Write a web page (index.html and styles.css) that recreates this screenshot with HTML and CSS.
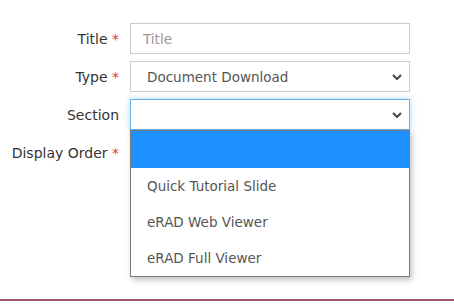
FILE: index.html
```html
<!DOCTYPE html>
<html lang="en">
<head>
<meta charset="UTF-8">
<meta name="viewport" content="width=device-width, initial-scale=1.0">
<title>Edit Link</title>
<link rel="stylesheet" href="styles.css">
</head>
<body>

<form class="link-form">
  <div class="form-row">
    <label class="form-label" for="title">Title <span class="req">*</span></label>
    <input class="form-control" type="text" id="title" placeholder="Title">
  </div>

  <div class="form-row">
    <label class="form-label">Type <span class="req">*</span></label>
    <div class="form-control select">
      <span class="select-value">Document Download</span>
      <svg class="chevron" viewBox="0 0 10 6" width="10" height="6"><path d="M1 1l4 4 4-4" fill="none" stroke="#444" stroke-width="2"/></svg>
    </div>
  </div>

  <div class="form-row">
    <label class="form-label">Section</label>
    <div class="select-wrap">
      <div class="form-control select focused">
        <span class="select-value"></span>
        <svg class="chevron" viewBox="0 0 10 6" width="10" height="6"><path d="M1 1l4 4 4-4" fill="none" stroke="#444" stroke-width="2"/></svg>
      </div>
      <!-- open dropdown list -->
      <ul class="dropdown">
        <li class="option active"></li>
        <li class="option">Quick Tutorial Slide</li>
        <li class="option">eRAD Web Viewer</li>
        <li class="option">eRAD Full Viewer</li>
      </ul>
    </div>
  </div>

  <div class="form-row">
    <label class="form-label">Display Order <span class="req">*</span></label>
    <div class="form-control blank"></div>
  </div>
</form>

<div class="footer-line"></div>

</body>
</html>
```

FILE: styles.css
```css
body {
  margin: 0;
  background: #fff;
  font-family: "DejaVu Sans", Verdana, sans-serif;
  font-size: 14px;
  color: #333;
  height: 307px;
  display: flex;
  flex-direction: column;
}

.link-form {
  padding-top: 23px;
  display: flex;
  flex-direction: column;
  gap: 7px;
  height: 270px;
}

.form-row {
  display: flex;
  align-items: center;
  height: 31px;
}

.form-label {
  width: 130px;
  text-align: right;
  padding-right: 11px;
  box-sizing: border-box;
  flex-shrink: 0;
}

.req {
  color: #e8323c;
}

.form-control {
  box-sizing: border-box;
  width: 280px;
  height: 31px;
  border: 1px solid #ccc;
  background: #fff;
  font-family: inherit;
  font-size: 13.5px;
  color: #555;
  padding: 0 12px;
  outline: none;
}

.form-control::placeholder {
  color: #999;
}

.select {
  display: flex;
  align-items: center;
  justify-content: space-between;
  padding: 0 7px 0 16px;
}

.chevron {
  display: block;
}

.select.focused {
  border-color: #66afe9;
  box-shadow: 0 0 6px rgba(102, 175, 233, 0.5);
}

.blank {
  visibility: hidden;
}

.select-wrap {
  position: relative;
}

.dropdown {
  position: absolute;
  top: 31px;
  left: 0;
  width: 280px;
  box-sizing: border-box;
  margin: 0;
  padding: 0;
  list-style: none;
  background: #fff;
  border: 1px solid #7a7a7a;
  box-shadow: 2px 3px 6px rgba(0, 0, 0, 0.25);
  font-size: 13.5px;
  z-index: 2;
}

.option {
  height: 36px;
  line-height: 36px;
  padding-left: 16px;
  color: #555;
}

.option.active {
  background: #1e90ff;
  height: 37px;
}

.footer-line {
  margin-top: auto;
  margin-bottom: 6px;
  height: 2px;
  background: #9b5a68;
}
```
